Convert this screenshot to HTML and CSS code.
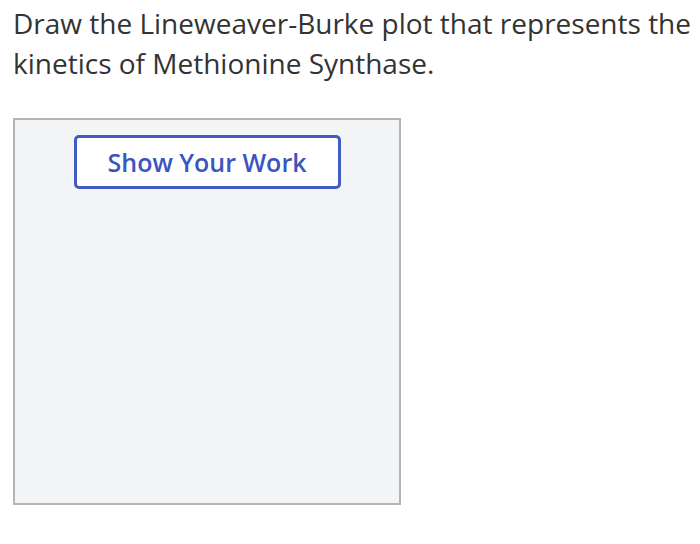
FILE: index.html
```html
<!DOCTYPE html>
<html>
<head>
<meta charset="utf-8">
<link rel="stylesheet" href="styles.css">
</head>
<body>
<div class="page">
  <p class="question">Draw the Lineweaver-Burke plot that represents the kinetics of Methionine Synthase.</p>
  <div class="canvas">
    <button class="work-btn">Show Your Work</button>
  </div>
</div>
</body>
</html>
```

FILE: styles.css
```css
html, body {
  margin: 0;
  padding: 0;
  background: #fff;
}
.page {
  padding: 0 0 0 13px;
  font-family: "Open Sans", sans-serif;
}
.question {
  margin: 0;
  padding-top: 3px;
  font-size: 28px;
  line-height: 40px;
  color: #333;
  width: 687px;
}
.canvas {
  margin-top: 35px;
  width: 384px;
  height: 368px;
  border: 2px solid #b4b4b4;
  background: #f3f4f6;
  display: flex;
  justify-content: center;
  align-items: flex-start;
  padding-top: 15px;
  box-sizing: content-box;
}
.work-btn {
  width: 267px;
  height: 54px;
  border: 3px solid #3f5bc4;
  border-radius: 5px;
  background: #fff;
  color: #3a55bf;
  font-family: "Open Sans", sans-serif;
  font-weight: 600;
  font-size: 25px;
  padding: 0;
}
```
